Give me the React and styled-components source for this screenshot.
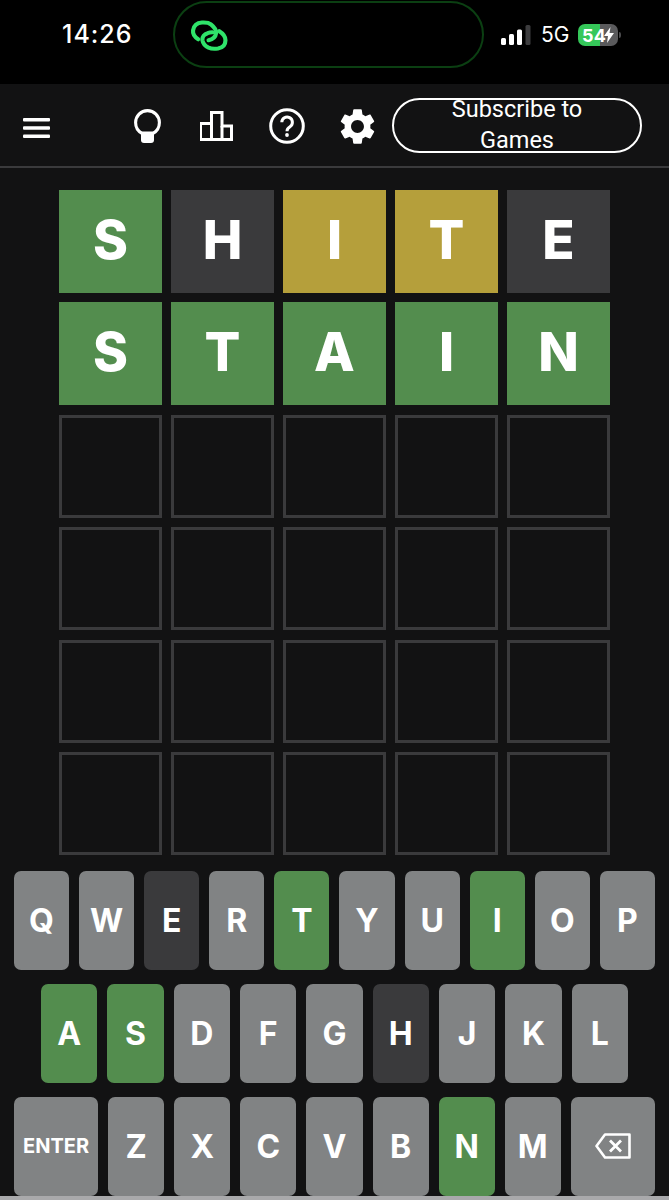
import React from "react";
import styled, { createGlobalStyle } from "styled-components";

const GlobalStyle = createGlobalStyle`
  html, body {
    margin: 0;
    padding: 0;
    background: #121213;
  }
  * {
    box-sizing: border-box;
  }
`;

const tileColors = {
  correct: "#538d4e",
  present: "#b59f3b",
  absent: "#3a3a3c",
};

const keyColors = {
  ...tileColors,
  unused: "#818384",
};

const Page = styled.div`
  width: 669px;
  height: 1200px;
  display: flex;
  flex-direction: column;
  overflow: hidden;
  background: #121213;
  font-family: Inter, "Liberation Sans", Arial, sans-serif;
  color: #fff;
`;

const StatusBar = styled.div`
  height: 84px;
  flex: none;
  background: #000;
  display: flex;
  align-items: flex-start;
  padding: 1px 0 0 62px;
`;

const Time = styled.div`
  width: 111px;
  margin-top: 18px;
  font-size: 25px;
  font-weight: 500;
  letter-spacing: 1px;
  line-height: 30px;
`;

const Island = styled.div`
  width: 311px;
  height: 67px;
  flex: none;
  display: flex;
  align-items: flex-start;
  padding: 17px 0 0 15px;
  background: #000;
  border: 2px solid #0b3f12;
  border-radius: 34px;
`;

const StatusRight = styled.div`
  display: flex;
  align-items: center;
  margin: 22px 0 0 17px;
`;

const NetLabel = styled.span`
  width: 37px;
  margin-left: 10px;
  font-size: 21px;
  font-weight: 400;
  line-height: 24px;
`;

const Battery = styled.div`
  position: relative;
  width: 40px;
  height: 22px;
  display: flex;
  align-items: center;
  padding-left: 4px;
  border-radius: 7px;
  background: linear-gradient(90deg, #35c759 0 55%, #5a5a5c 55% 100%);
  font-size: 18px;
  font-weight: 700;
  letter-spacing: 0.3px;

  &::after {
    content: "";
    position: absolute;
    right: -3px;
    top: 8px;
    width: 2px;
    height: 6px;
    border-radius: 0 2px 2px 0;
    background: #4a4a4c;
  }
`;

const BatteryBolt = styled.svg`
  position: absolute;
  right: 4px;
  top: 3px;
`;

const Header = styled.header`
  height: 84px;
  flex: none;
  display: flex;
  align-items: center;
  padding-left: 23px;
  border-bottom: 2px solid #3a3a3c;
`;

const MenuButton = styled.div`
  display: flex;
  margin-top: 5px;
`;

const IconGroup = styled.div`
  display: flex;
  margin: 2px 0 0 62px;
`;

const IconSlot = styled.div`
  width: 70px;
  height: 44px;
  display: flex;
  align-items: center;
  justify-content: center;
`;

const SubscribeButton = styled.div`
  width: 250px;
  height: 55px;
  display: flex;
  align-items: center;
  justify-content: center;
  padding: 0 50px;
  border: 2px solid #fff;
  border-radius: 28px;
  font-family: Roboto, "Liberation Sans", sans-serif;
  font-size: 23.5px;
  line-height: 31px;
  text-align: center;
`;

const Board = styled.div`
  display: grid;
  grid-template-columns: repeat(5, 103px);
  grid-auto-rows: 103px;
  column-gap: 9px;
  row-gap: 9.4px;
  padding: 22px 0 0 59px;
`;

const Tile = styled.div`
  display: flex;
  align-items: center;
  justify-content: center;
  padding-bottom: 3px;
  background: ${(p) => (p.$state ? tileColors[p.$state] : "transparent")};
  border: ${(p) => (p.$state ? "none" : "3px solid #3a3a3c")};
  font-size: 53px;
  font-weight: 800;
  line-height: 1;
`;

const Keyboard = styled.div`
  display: flex;
  flex-direction: column;
  gap: 14px;
  padding-top: 16px;
`;

const KeyRow = styled.div`
  height: 99px;
  display: flex;
  gap: 10px;
  padding: 0 ${(p) => p.$inset}px;
`;

const Key = styled.div`
  flex: ${(p) => (p.$wide ? "1.5" : "1")} 1 0;
  display: flex;
  align-items: center;
  justify-content: center;
  background: ${(p) => keyColors[p.$state || "unused"]};
  border-radius: 7px;
  font-size: ${(p) => (p.$small ? "20px" : "32px")};
  font-weight: 700;
`;

const BottomStrip = styled.div`
  height: 4px;
  margin-top: auto;
  background: #a9a9ab;
`;

const Hamburger = () => (
  <svg width="27" height="20" viewBox="0 0 27 20" fill="#fff">
    <rect x="0" y="0" width="27" height="3.6" rx="1" />
    <rect x="0" y="8.2" width="27" height="3.6" rx="1" />
    <rect x="0" y="16.4" width="27" height="3.6" rx="1" />
  </svg>
);

const Bulb = () => (
  <svg width="27" height="34" viewBox="0 0 27 34">
    <path
      d="M8 24.5C4 22.3 1.6 18.3 1.6 13.6 1.6 7 6.9 1.6 13.5 1.6S25.4 7 25.4 13.6c0 4.7-2.4 8.7-6.4 10.9"
      fill="none"
      stroke="#fff"
      strokeWidth="3.1"
    />
    <path d="M7 22.5h13v8.5a3 3 0 0 1-3 3h-7a3 3 0 0 1-3-3z" fill="#fff" />
  </svg>
);

const Stats = () => (
  <svg width="34" height="30" viewBox="1 0 34 30" fill="none" stroke="#fff" strokeWidth="3">
    <path d="M1.5 28.5V12.5H12.5V1.5H23V15H32.5V28.5Z" />
    <path d="M12.5 12.5V28.5M23 15V28.5" />
  </svg>
);

const Help = () => (
  <svg width="36" height="36" viewBox="0 0 36 36" fill="none" stroke="#fff">
    <circle cx="18" cy="18" r="16.3" strokeWidth="3" />
    <path d="M12.8 14.3a5.3 5.3 0 1 1 8.2 4.4c-1.9 1.2-3 2.3-3 4.5" strokeWidth="3" />
    <circle cx="18" cy="27" r="1.9" fill="#fff" stroke="none" />
  </svg>
);

const Gear = () => (
  <svg width="43" height="43" viewBox="0 0 24 24" fill="#fff">
    <path d="M19.14 12.94c.04-.3.06-.61.06-.94 0-.32-.02-.64-.07-.94l2.03-1.58c.18-.14.23-.41.12-.61l-1.92-3.32c-.12-.22-.37-.29-.59-.22l-2.39.96c-.5-.38-1.03-.7-1.62-.94l-.36-2.54c-.04-.24-.24-.41-.48-.41h-3.84c-.24 0-.43.17-.47.41l-.36 2.54c-.59.24-1.13.57-1.62.94l-2.39-.96c-.22-.08-.47 0-.59.22L2.74 8.87c-.12.21-.08.47.12.61l2.03 1.58c-.05.3-.09.63-.09.94s.02.64.07.94l-2.03 1.58c-.18.14-.23.41-.12.61l1.92 3.32c.12.22.37.29.59.22l2.39-.96c.5.38 1.03.7 1.62.94l.36 2.54c.05.24.24.41.48.41h3.84c.24 0 .44-.17.47-.41l.36-2.54c.59-.24 1.13-.56 1.62-.94l2.39.96c.22.08.47 0 .59-.22l1.92-3.32c.12-.22.07-.47-.12-.61l-2.01-1.58zM12 15.6c-1.98 0-3.6-1.62-3.6-3.6s1.62-3.6 3.6-3.6 3.6 1.62 3.6 3.6-1.62 3.6-3.6 3.6z" />
  </svg>
);

const LinkMark = () => (
  <svg width="39" height="31" viewBox="-1.5 -1.5 41 33" fill="none" stroke="#2fe36a" strokeWidth="4.4" strokeLinecap="round">
    <path d="M7 19C3 16.5 1 13.5 1.500 9.500 2.300 4.500 6 1.500 11 1.200c3.500-.2 7-.2 9.500 2 3.500 2.800 6 6 5.500 9.300-.5 4-3.500 6.500-8 7.500" />
    <path d="M29.500 10.500C33.500 13 36 16 36 20c0 5-3.500 8-8 8.800-3.500.5-7 .5-10-.8-3.500-1.800-6-4.500-6.500-8-.4-3.500 2-6.500 5.500-7.500 1.500-.5 3.500-.8 5-.9" />
  </svg>
);

const Signal = () => (
  <svg width="30" height="20" viewBox="0 0 30 20">
    <rect x="0" y="13" width="5" height="7" rx="1.5" fill="#fff" />
    <rect x="8" y="9" width="5" height="11" rx="1.5" fill="#fff" />
    <rect x="16" y="4.5" width="5" height="15.5" rx="1.5" fill="#fff" />
    <rect x="24.5" y="0" width="5" height="20" rx="1.5" fill="#3c3c3e" />
  </svg>
);

const Backspace = () => (
  <svg width="36" height="26" viewBox="0 0 36 26" fill="none" stroke="#fff" strokeWidth="2.6">
    <path d="M10 1.5H34.5V24.5H10L1.5 13Z" strokeLinejoin="round" />
    <path d="M15 7.5L26 18.5M26 7.5L15 18.5" strokeWidth="2.8" />
  </svg>
);

const guesses = [
  [["S", "correct"], ["H", "absent"], ["I", "present"], ["T", "present"], ["E", "absent"]],
  [["S", "correct"], ["T", "correct"], ["A", "correct"], ["I", "correct"], ["N", "correct"]],
];

const keyStates = {
  E: "absent", H: "absent",
  T: "correct", I: "correct", A: "correct", S: "correct", N: "correct",
};

const App = () => {
  const blanks = Array.from({ length: 20 });

  return (
    <Page>
      <GlobalStyle />
      <StatusBar>
        <Time>14:26</Time>
        <Island>
          <LinkMark />
        </Island>
        <StatusRight>
          <Signal />
          <NetLabel>5G</NetLabel>
          <Battery>
            54
            <BatteryBolt width="10" height="16" viewBox="0 0 10 16" fill="#fff">
              <path d="M6.5 0L0 9h4l-1 7 7-10H5.500z" />
            </BatteryBolt>
          </Battery>
        </StatusRight>
      </StatusBar>

      <Header>
        <MenuButton><Hamburger /></MenuButton>
        <IconGroup>
          <IconSlot><Bulb /></IconSlot>
          <IconSlot><Stats /></IconSlot>
          <IconSlot><Help /></IconSlot>
          <IconSlot><Gear /></IconSlot>
        </IconGroup>
        <SubscribeButton>Subscribe to Games</SubscribeButton>
      </Header>

      <Board>
        {guesses.flat().map(([letter, state], i) => (
          <Tile key={i} $state={state}>{letter}</Tile>
        ))}
        {blanks.map((_, i) => (
          <Tile key={`blank-${i}`} />
        ))}
      </Board>

      <Keyboard>
        <KeyRow $inset={14}>
          {"QWERTYUIOP".split("").map((k) => (
            <Key key={k} $state={keyStates[k]}>{k}</Key>
          ))}
        </KeyRow>
        <KeyRow $inset={41}>
          {"ASDFGHJKL".split("").map((k) => (
            <Key key={k} $state={keyStates[k]}>{k}</Key>
          ))}
        </KeyRow>
        <KeyRow $inset={14}>
          <Key $wide $small>ENTER</Key>
          {"ZXCVBNM".split("").map((k) => (
            <Key key={k} $state={keyStates[k]}>{k}</Key>
          ))}
          <Key $wide><Backspace /></Key>
        </KeyRow>
      </Keyboard>
      <BottomStrip />
    </Page>
  );
};

export default App;
